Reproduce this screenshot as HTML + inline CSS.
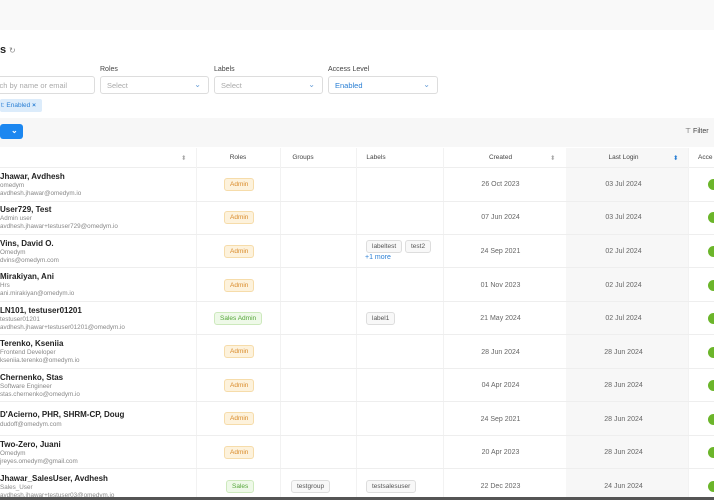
<!DOCTYPE html>
<html><head><meta charset="utf-8"><style>
*{box-sizing:border-box;margin:0;padding:0}
body{width:714px;height:500px;overflow:hidden;background:#fff;font-family:"Liberation Sans",sans-serif;position:relative;color:#222}
.a{position:absolute}
.top{left:0;top:0;width:714px;height:30px;background:#f9f9f9}
.lbl{font-size:7px;color:#444}
.inp{height:18px;border:1px solid #ddd;border-radius:3px;font-size:7.5px;color:#aaa;padding:4px 6px}
.chev{position:absolute;right:7px;top:3px;color:#6aa0d8;font-size:8px}
.bar{left:0;top:118px;width:714px;height:29px;background:#f7f7f7}
.hdr{left:0;top:148px;width:714px;height:20px;border-bottom:1px solid #eee}
.h{position:absolute;top:154px;font-size:6.5px;color:#444;text-align:center}
.row{position:absolute;left:0;width:714px;border-bottom:1px solid #eee}
.nm{position:absolute;left:0;font-size:8px;font-weight:bold;color:#222}
.sb{position:absolute;left:0;font-size:6.3px;color:#888;line-height:8px}
.tag{position:absolute;font-size:6.5px;border-radius:3px;padding:2px 5px}
.adm{background:#fdf2dc;color:#d98b2b;border:1px solid #f6dcaa}
.sal{background:#eef9e8;color:#55a63a;border:1px solid #cde9bd}
.gr{background:#f8f8f8;color:#555;border:1px solid #ddd}
.dt{position:absolute;font-size:7px;color:#666;text-align:center}
.tg{position:absolute;left:708px;width:14px;height:11px;border-radius:6px;background:#6bb52a;margin-top:-1px}
.vl{position:absolute;top:148px;width:1px;height:352px;background:#f2f2f2}
</style></head><body>
<div class="a top"></div>
<div class="a" style="left:0;top:44px;font-size:11px;font-weight:bold">s</div>
<div class="a" style="left:9px;top:46px;font-size:8px;color:#888">↻</div>
<div class="a lbl" style="left:100px;top:66px">Roles</div>
<div class="a lbl" style="left:214px;top:66px">Labels</div>
<div class="a lbl" style="left:328px;top:66px">Access Level</div>
<div class="a inp" style="left:-10px;top:76px;width:105px">rch by name or email</div>
<div class="a inp" style="left:100px;top:76px;width:109px">Select<span class="chev">⌄</span></div>
<div class="a inp" style="left:214px;top:76px;width:109px">Select<span class="chev">⌄</span></div>
<div class="a inp" style="left:328px;top:76px;width:110px;color:#2a7fd4">Enabled<span class="chev">⌄</span></div>
<div class="a" style="left:0;top:99px;width:42px;height:13px;background:#dcecfb;border-radius:2px;font-size:6.5px;color:#2a7fd4;padding:3px 0 0 1px">t: Enabled <b>×</b></div>
<div class="a bar"></div>
<div class="a" style="left:0;top:124px;width:23px;height:15px;background:#1c87f0;border-radius:3px;color:#fff;font-size:8px;font-weight:bold;padding:2px 0 0 11px">⌄</div>
<div class="a" style="left:685px;top:127px;font-size:7px;color:#444">⊤ Filter</div>
<div class="a" style="left:566px;top:148px;width:122px;height:352px;background:#f7f7f7"></div>
<div class="a hdr"></div>
<div class="vl" style="left:196px"></div><div class="vl" style="left:280px"></div><div class="vl" style="left:356px"></div><div class="vl" style="left:443px"></div><div class="vl" style="left:688px"></div>
<div class="h" style="left:181px;color:#aaa">⬍</div>
<div class="h" style="left:196px;width:84px">Roles</div>
<div class="h" style="left:280px;width:46px">Groups</div>
<div class="h" style="left:356px;width:40px">Labels</div>
<div class="h" style="left:443px;width:115px">Created</div>
<div class="h" style="left:550px;color:#aaa">⬍</div>
<div class="h" style="left:566px;width:115px">Last Login</div>
<div class="h" style="left:673px;color:#2a7fd4">⬍</div>
<div class="h" style="left:698px">Acce</div>

<div class="row" style="top:168px;height:34px"></div>
<div class="nm" style="top:172px">Jhawar, Avdhesh</div><div class="sb" style="top:182px">omedym<br>avdhesh.jhawar@omedym.io</div>
<div class="tag adm" style="left:224px;top:178px">Admin</div>
<div class="dt" style="left:443px;width:115px;top:181px">26 Oct 2023</div><div class="dt" style="left:566px;width:115px;top:181px">03 Jul 2024</div><div class="tg" style="top:180px"></div>

<div class="row" style="top:202px;height:33px"></div>
<div class="nm" style="top:205px">User729, Test</div><div class="sb" style="top:215px">Admin user<br>avdhesh.jhawar+testuser729@omedym.io</div>
<div class="tag adm" style="left:224px;top:211px">Admin</div>
<div class="dt" style="left:443px;width:115px;top:214px">07 Jun 2024</div><div class="dt" style="left:566px;width:115px;top:214px">03 Jul 2024</div><div class="tg" style="top:213px"></div>

<div class="row" style="top:235px;height:33px"></div>
<div class="nm" style="top:239px">Vins, David O.</div><div class="sb" style="top:249px">Omedym<br>dvins@omedym.com</div>
<div class="tag adm" style="left:224px;top:245px">Admin</div>
<div class="tag gr" style="left:366px;top:240px">labeltest</div><div class="tag gr" style="left:405px;top:240px">test2</div>
<div class="a" style="left:365px;top:254px;font-size:7px;color:#2a7fd4">+1 more</div>
<div class="dt" style="left:443px;width:115px;top:248px">24 Sep 2021</div><div class="dt" style="left:566px;width:115px;top:248px">02 Jul 2024</div><div class="tg" style="top:247px"></div>

<div class="row" style="top:268px;height:34px"></div>
<div class="nm" style="top:272px">Mirakiyan, Ani</div><div class="sb" style="top:282px">Hrs<br>ani.mirakiyan@omedym.io</div>
<div class="tag adm" style="left:224px;top:279px">Admin</div>
<div class="dt" style="left:443px;width:115px;top:282px">01 Nov 2023</div><div class="dt" style="left:566px;width:115px;top:282px">02 Jul 2024</div><div class="tg" style="top:281px"></div>

<div class="row" style="top:302px;height:33px"></div>
<div class="nm" style="top:306px">LN101, testuser01201</div><div class="sb" style="top:316px">testuser01201<br>avdhesh.jhawar+testuser01201@omedym.io</div>
<div class="tag sal" style="left:214px;top:312px">Sales Admin</div>
<div class="tag gr" style="left:366px;top:312px">label1</div>
<div class="dt" style="left:443px;width:115px;top:315px">21 May 2024</div><div class="dt" style="left:566px;width:115px;top:315px">02 Jul 2024</div><div class="tg" style="top:314px"></div>

<div class="row" style="top:335px;height:34px"></div>
<div class="nm" style="top:339px">Terenko, Kseniia</div><div class="sb" style="top:349px">Frontend Developer<br>kseniia.terenko@omedym.io</div>
<div class="tag adm" style="left:224px;top:345px">Admin</div>
<div class="dt" style="left:443px;width:115px;top:349px">28 Jun 2024</div><div class="dt" style="left:566px;width:115px;top:349px">28 Jun 2024</div><div class="tg" style="top:348px"></div>

<div class="row" style="top:369px;height:33px"></div>
<div class="nm" style="top:373px">Chernenko, Stas</div><div class="sb" style="top:383px">Software Engineer<br>stas.chernenko@omedym.io</div>
<div class="tag adm" style="left:224px;top:379px">Admin</div>
<div class="dt" style="left:443px;width:115px;top:382px">04 Apr 2024</div><div class="dt" style="left:566px;width:115px;top:382px">28 Jun 2024</div><div class="tg" style="top:381px"></div>

<div class="row" style="top:402px;height:34px"></div>
<div class="nm" style="top:410px">D'Acierno, PHR, SHRM-CP, Doug</div><div class="sb" style="top:421px">dudoff@omedym.com</div>
<div class="tag adm" style="left:224px;top:412px">Admin</div>
<div class="dt" style="left:443px;width:115px;top:416px">24 Sep 2021</div><div class="dt" style="left:566px;width:115px;top:416px">28 Jun 2024</div><div class="tg" style="top:415px"></div>

<div class="row" style="top:436px;height:33px"></div>
<div class="nm" style="top:440px">Two-Zero, Juani</div><div class="sb" style="top:450px">Omedym<br>jreyes.omedym@gmail.com</div>
<div class="tag adm" style="left:224px;top:446px">Admin</div>
<div class="dt" style="left:443px;width:115px;top:449px">20 Apr 2023</div><div class="dt" style="left:566px;width:115px;top:449px">28 Jun 2024</div><div class="tg" style="top:448px"></div>

<div class="nm" style="top:474px">Jhawar_SalesUser, Avdhesh</div><div class="sb" style="top:484px">Sales_User<br>avdhesh.jhawar+testuser03@omedym.io</div>
<div class="tag sal" style="left:226px;top:480px">Sales</div>
<div class="tag gr" style="left:291px;top:480px">testgroup</div><div class="tag gr" style="left:366px;top:480px">testsalesuser</div>
<div class="dt" style="left:443px;width:115px;top:483px">22 Dec 2023</div><div class="dt" style="left:566px;width:115px;top:483px">24 Jun 2024</div><div class="tg" style="top:482px"></div>
<div class="a" style="left:0;top:497px;width:714px;height:3px;background:#555"></div>
</body></html>
